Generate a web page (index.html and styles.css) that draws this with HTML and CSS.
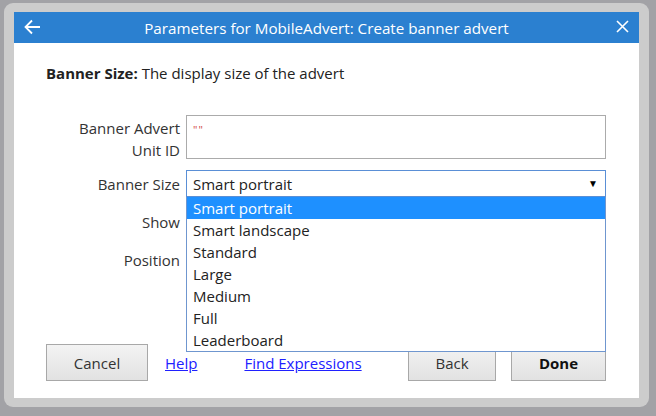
FILE: index.html
```html
<!DOCTYPE html>
<html>
<head>
<meta charset="utf-8">
<link rel="stylesheet" href="styles.css">
</head>
<body>
<div class="frame">
  <div class="dialog">
    <div class="header">
      <svg class="back" width="18" height="16" viewBox="0 0 18 16"><path d="M17 8H2.5M9 1.5L2.5 8L9 14.5" fill="none" stroke="#fff" stroke-width="1.8"/></svg>
      <div class="title">Parameters for MobileAdvert: Create banner advert</div>
      <svg class="close" width="13" height="13" viewBox="0 0 13 13"><path d="M1 1l11 11M12 1L1 12" fill="none" stroke="#fff" stroke-width="1.6"/></svg>
    </div>
    <div class="body">
      <p class="desc"><b>Banner Size:</b> The display size of the advert</p>
      <div class="form">
        <div class="label two">Banner Advert<br>Unit ID</div>
        <div class="input tall"><span class="str">""</span></div>
        <div class="label">Banner Size</div>
        <div class="select-wrap">
          <div class="select">Smart portrait<span class="arrow">▼</span></div>
          <ul class="list">
            <li class="sel">Smart portrait</li>
            <li>Smart landscape</li>
            <li>Standard</li>
            <li>Large</li>
            <li>Medium</li>
            <li>Full</li>
            <li>Leaderboard</li>
          </ul>
        </div>
        <div class="label">Show</div>
        <div class="input short"></div>
        <div class="label">Position</div>
        <div class="input short"></div>
      </div>
      <div class="buttons">
        <button class="btn cancel">Cancel</button>
        <a class="link help" href="#">Help</a>
        <a class="link find" href="#">Find Expressions</a>
        <span class="spacer"></span>
        <button class="btn back-btn">Back</button>
        <button class="btn done">Done</button>
      </div>
    </div>
  </div>
</div>
</body>
</html>
```
FILE: styles.css
```css
html, body {
  margin: 0;
  padding: 0;
}
body {
  background: #a2a2a6;
  width: 656px;
  height: 416px;
  overflow: hidden;
  font-family: "Open Sans", "Noto Sans", sans-serif;
  font-size: 15px;
  color: #222;
}
.frame {
  margin: 3px 0 0 4px;
  width: 625px;
  height: 386px;
  padding: 9px 10px 9px 10px;
  background: #cccccc;
  border-radius: 9px;
}
.dialog {
  width: 625px;
  height: 386px;
  background: #fff;
  display: flex;
  flex-direction: column;
}
.header {
  height: 31px;
  background: #2b80d0;
  display: flex;
  align-items: center;
  color: #fff;
  padding: 0 10px 0 9px;
  flex: none;
}
.back { flex: none; margin-top: -2px; }
.title {
  flex: 1;
  text-align: center;
  font-size: 15.2px;
  padding-right: 4px;
}
.close { flex: none; margin-top: -2px; }
.body {
  flex: 1;
  display: flex;
  flex-direction: column;
  padding: 20px 33px 17px 32px;
}
.desc {
  margin: 0;
  line-height: 20px;
}
.form {
  margin-top: 32px;
  display: grid;
  grid-template-columns: 134px 420px;
  grid-template-rows: 44px 27px 27px 27px;
  column-gap: 6px;
  row-gap: 11px;
}
.label {
  text-align: right;
  line-height: 22px;
  padding-top: 3px;
  color: #333;
}
.label.two { padding-top: 2px; }
.input {
  border: 1px solid #ababab;
  box-sizing: border-box;
  background: #fff;
}
.input.tall { height: 44px; padding: 2px 6px; line-height: 20px; }
.input.short { height: 27px; }
.str { color: #d04848; font-size: 11px; letter-spacing: 1px; }
.select-wrap { position: relative; }
.select {
  height: 27px;
  box-sizing: border-box;
  border: 1px solid #5a8fd6;
  padding: 1px 6px 0;
  line-height: 24px;
  position: relative;
}
.arrow {
  position: absolute;
  right: 7px;
  top: 0;
  font-size: 10px;
  color: #000;
}
.list {
  position: absolute;
  left: 0;
  top: 27px;
  width: 420px;
  box-sizing: border-box;
  margin: 0;
  padding: 0;
  list-style: none;
  background: #fff;
  border: 1px solid #6f96cf;
  border-top: none;
  z-index: 2;
}
.list li {
  height: 22px;
  box-sizing: border-box;
  padding: 1px 6px 0;
  line-height: 21px;
}
.list li.sel {
  background: #1e90ff;
  color: #fff;
}
.buttons {
  margin-top: auto;
  display: flex;
  align-items: center;
}
.btn {
  font-family: inherit;
  font-size: 15px;
  height: 37px;
  border: 1px solid #a8a8a8;
  background: linear-gradient(#f3f3f3, #e2e2e2);
  color: #333;
  padding: 0;
}
.cancel { width: 102px; }
.back-btn { width: 88px; }
.done { width: 95px; margin-left: 15px; font-weight: bold; color: #111; }
.link {
  color: #2020ff;
  text-decoration: underline;
}
.help { margin-left: 17px; }
.find { margin-left: 47px; }
.spacer { flex: 1; }
```
